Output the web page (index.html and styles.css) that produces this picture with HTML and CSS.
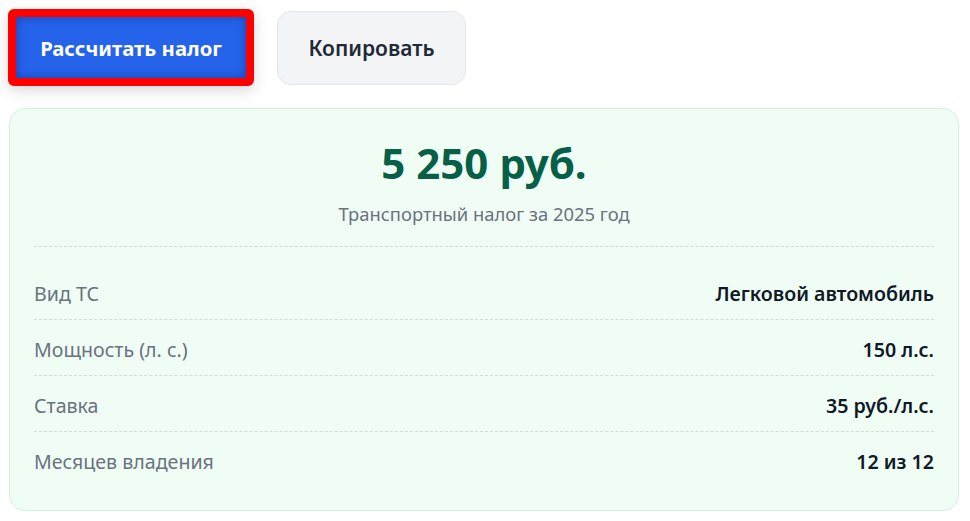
FILE: index.html
```html
<!DOCTYPE html>
<html lang="ru">
<head>
<meta charset="utf-8">
<title>Транспортный налог</title>
<link rel="stylesheet" href="styles.css">
</head>
<body>
<div class="page">
  <div class="actions">
    <button class="btn btn-primary" type="button">Рассчитать налог</button>
    <button class="btn btn-secondary" type="button">Копировать</button>
  </div>
  <section class="result">
    <div class="summary">
      <div class="amount">5 250 руб.</div>
      <div class="caption">Транспортный налог за 2025 год</div>
    </div>
    <dl class="details">
      <div class="row"><dt>Вид ТС</dt><dd>Легковой автомобиль</dd></div>
      <div class="row"><dt>Мощность (л. с.)</dt><dd>150 л.с.</dd></div>
      <div class="row"><dt>Ставка</dt><dd>35 руб./л.с.</dd></div>
      <div class="row"><dt>Месяцев владения</dt><dd>12 из 12</dd></div>
    </dl>
  </section>
</div>
</body>
</html>
```

FILE: styles.css
```css
* { box-sizing: border-box; }
html, body { margin: 0; padding: 0; background: #ffffff; }
body { font-family: "Noto Sans", "Open Sans", sans-serif; color: #111827; }

.page { padding: 9px 11px 0 8px; }

.actions {
  display: flex;
  align-items: center;
  gap: 23px;
}

.btn {
  font-family: inherit;
  line-height: 28px;
  cursor: pointer;
  display: flex;
  align-items: center;
  justify-content: center;
  padding: 0;
}

.btn-primary {
  width: 246px;
  height: 77px;
  font-size: 20.3px;
  background: #2563eb;
  color: #ffffff;
  font-weight: 700;
  border: 8px solid #ff0000;
  border-radius: 6px;
  box-shadow: inset 0 0 8px rgba(15, 30, 120, 0.55), 0 4px 14px rgba(0, 0, 0, 0.16);
}

.btn-secondary {
  width: 189px;
  height: 74px;
  font-size: 21px;
  background: #f3f4f6;
  color: #1f2937;
  font-weight: 600;
  border: 1px solid #e5e7eb;
  border-radius: 14px;
}

.result {
  margin: 22px 0 0 1px;
  background: #effdf4;
  border: 1px solid #d1f2de;
  border-radius: 16px;
  padding: 29px 24px 23px;
}

.summary {
  text-align: center;
  padding-bottom: 20px;
  border-bottom: 1px dashed #cfd8d3;
}

.amount {
  font-size: 42px;
  line-height: 50px;
  font-weight: 700;
  color: #065f46;
}

.caption {
  margin-top: 13px;
  font-size: 18.4px;
  line-height: 25px;
  color: #6b7280;
}

.details {
  margin: 17px 0 0;
}

.row {
  display: flex;
  justify-content: space-between;
  align-items: center;
  padding: 16px 0 11px;
  border-bottom: 1px dashed #d3dcd7;
}

.row:last-child { border-bottom: none; }

.row dt {
  font-size: 19.6px;
  line-height: 28px;
  color: #6b7280;
}

.row dd {
  margin: 0;
  font-size: 19.6px;
  line-height: 28px;
  font-weight: 600;
  color: #111827;
}
```
